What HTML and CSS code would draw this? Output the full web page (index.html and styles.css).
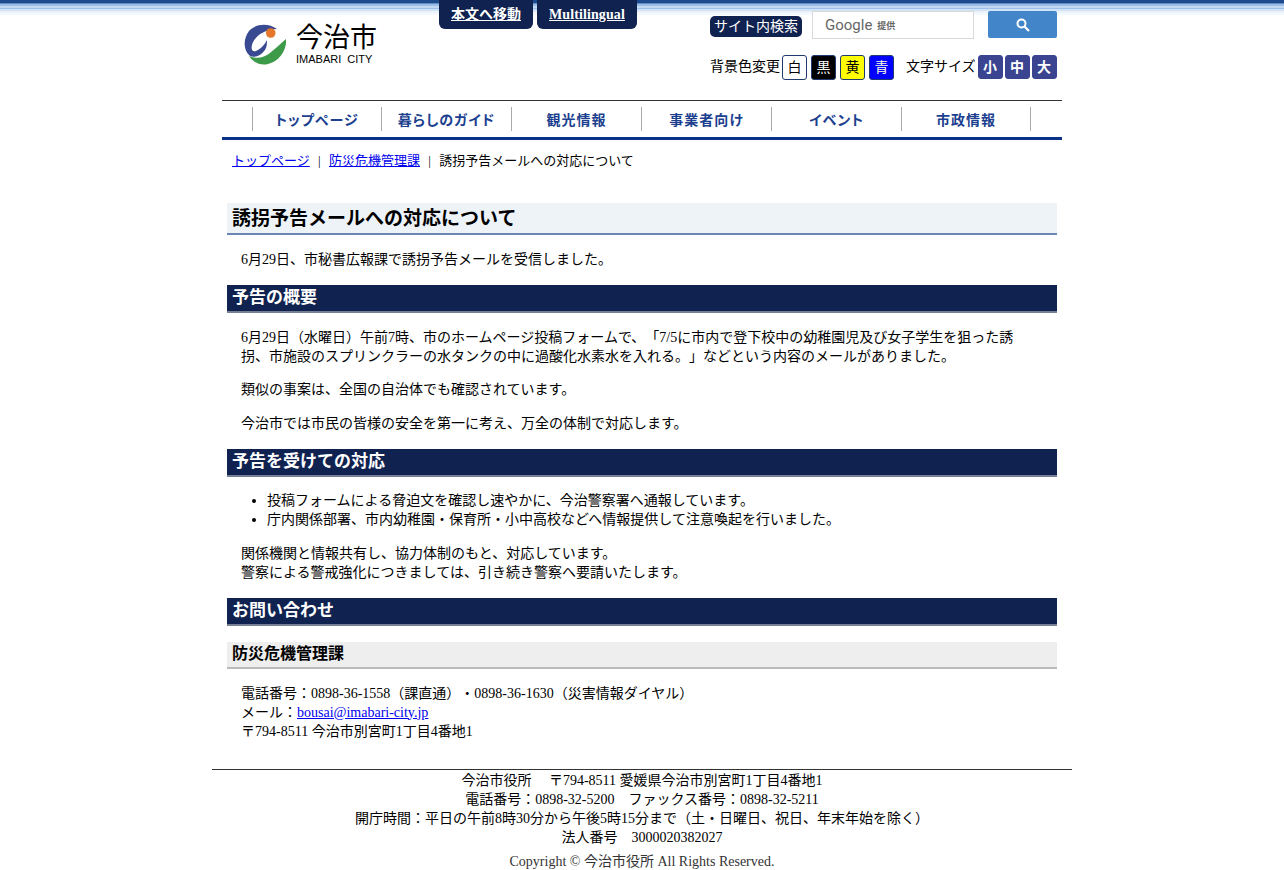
FILE: index.html
```html
<!DOCTYPE html>
<html lang="ja">

<head>
    <meta charset="UTF-8">
    <title>誘拐予告メールへの対応について</title>
    <link rel="stylesheet" href="styles.css">
</head>

<body>
    <div class="wrapper">
        <!-- Header -->
        <div class="header">
            <a class="logo" href="#">
                <svg width="42" height="42" viewBox="0 0 42 42">
                    <path d="M33 6C25 0 12 0 5 8C-1 16 -1 27 6 33C10 35 17 33 21 27C23 24 23 20 23 17C21 21 17 26 12 28C8 29 7 26 8 22C10 14 20 6 33 6Z" fill="#3a4a92"/>
                    <circle cx="26.7" cy="10" r="4.8" fill="#e5772a"/>
                    <path d="M42 16C43 26 36 38 24 41C16 43 9 39 5 33C12 36 20 35 26 30C31 26 36 21 42 16Z" fill="#3c9a49"/>
                </svg>
                <span class="logo-text">
                    <span class="logo-name">今治市</span>
                    <span class="logo-en">IMABARI&nbsp; CITY</span>
                </span>
            </a>
            <div class="skip-links">
                <a href="#">本文へ移動</a>
                <a href="#">Multilingual</a>
            </div>
            <div class="tools">
                <div class="search-row">
                    <span class="search-label">サイト内検索</span>
                    <div class="search-box"><span class="google">Google</span><span class="teikyo">提供</span></div>
                    <button class="search-btn">
                        <svg width="14" height="14" viewBox="0 0 14 14">
                            <circle cx="5.5" cy="5.5" r="4" fill="none" stroke="#fff" stroke-width="2"/>
                            <path d="M8.5 8.5L13 13" stroke="#fff" stroke-width="2.2"/>
                        </svg>
                    </button>
                </div>
                <div class="option-row">
                    <span class="option-label">背景色変更</span>
                    <span class="color-btn white">白</span>
                    <span class="color-btn black">黒</span>
                    <span class="color-btn yellow">黄</span>
                    <span class="color-btn blue">青</span>
                    <span class="option-label size-label">文字サイズ</span>
                    <span class="size-btn">小</span>
                    <span class="size-btn">中</span>
                    <span class="size-btn">大</span>
                </div>
            </div>
        </div>

        <!-- Navigation -->
        <div class="navbar">
            <a href="#">トップページ</a>
            <a href="#">暮らしのガイド</a>
            <a href="#">観光情報</a>
            <a href="#">事業者向け</a>
            <a href="#">イベント</a>
            <a href="#">市政情報</a>
        </div>

        <div class="breadcrumb">
            <a href="#">トップページ</a><span class="sep">|</span><a href="#">防災危機管理課</a><span class="sep">|</span>誘拐予告メールへの対応について
        </div>

        <!-- Content -->
        <div class="content">
            <h1>誘拐予告メールへの対応について</h1>
            <p>6月29日、市秘書広報課で誘拐予告メールを受信しました。</p>

            <h2>予告の概要</h2>
            <p>6月29日（水曜日）午前7時、市のホームページ投稿フォームで、「7/5に市内で登下校中の幼稚園児及び女子学生を狙った誘拐、市施設のスプリンクラーの水タンクの中に過酸化水素水を入れる。」などという内容のメールがありました。</p>
            <p>類似の事案は、全国の自治体でも確認されています。</p>
            <p>今治市では市民の皆様の安全を第一に考え、万全の体制で対応します。</p>

            <h2>予告を受けての対応</h2>
            <ul>
                <li>投稿フォームによる脅迫文を確認し速やかに、今治警察署へ通報しています。</li>
                <li>庁内関係部署、市内幼稚園・保育所・小中高校などへ情報提供して注意喚起を行いました。</li>
            </ul>
            <p>関係機関と情報共有し、協力体制のもと、対応しています。<br>警察による警戒強化につきましては、引き続き警察へ要請いたします。</p>

            <h2>お問い合わせ</h2>
            <h3>防災危機管理課</h3>
            <p>電話番号：0898-36-1558（課直通）・0898-36-1630（災害情報ダイヤル）<br>メール：<a href="#">bousai@imabari-city.jp</a><br>〒794-8511 今治市別宮町1丁目4番地1</p>
        </div>
    </div>

    <!-- Footer -->
    <div class="footer">
        <div class="address">
            今治市役所　 〒794-8511 愛媛県今治市別宮町1丁目4番地1<br>
            電話番号：0898-32-5200　ファックス番号：0898-32-5211<br>
            開庁時間：平日の午前8時30分から午後5時15分まで（土・日曜日、祝日、年末年始を除く）<br>
            法人番号　3000020382027
        </div>
        <div class="copyright">Copyright © 今治市役所 All Rights Reserved.</div>
    </div>
</body>

</html>
```

FILE: styles.css
```css
body {
    margin: 0;
    padding: 0;
    font-family: "Liberation Serif", "Noto Sans CJK JP", serif;
    font-size: 14px;
    line-height: 19px;
    text-spacing-trim: space-all;
    color: #000;
    background-color: #fff;
    background-image: linear-gradient(#1d4a8c 0, #1d4a8c 3px, #5f8cc6 3px, #5f8cc6 4px, #9dbde6 4px, #9dbde6 6px, #c3d8f2 6px, #c3d8f2 8px, #9dc0ea 8px, #9dc0ea 9px, #d3e3f6 9px, #d3e3f6 11px, #e6f0fb 11px, #ffffff 16px);
    background-size: 100% 16px;
    background-repeat: no-repeat;
}

a {
    color: #0000ee;
}

.wrapper {
    width: 840px;
    margin: 0 auto;
}

/* Header */
.header {
    display: flex;
    height: 100px;
}

.logo {
    display: flex;
    gap: 10px;
    width: 195px;
    height: 42px;
    margin: 23px 0 0 22px;
    text-decoration: none;
    color: #000;
}

.logo-text {
    display: flex;
    flex-direction: column;
    padding-top: 1px;
    font-family: "Liberation Sans", "Noto Sans CJK JP", sans-serif;
}

.logo-name {
    font-size: 27px;
    line-height: 28px;
}

.logo-en {
    font-size: 11px;
    line-height: 12px;
    margin-top: 1px;
}

.skip-links {
    display: flex;
    gap: 4px;
    align-items: flex-start;
    width: 271px;
}

.skip-links a {
    height: 29px;
    line-height: 29px;
    padding: 0 12px;
    color: #fff;
    font-weight: bold;
    background-color: #10224f;
    border-radius: 0 0 6px 6px;
}

.skip-links a:last-child {
    letter-spacing: 0.1px;
}

.tools {
    width: 347px;
}

.search-row {
    display: flex;
    align-items: flex-start;
    height: 33px;
    padding-top: 11px;
    margin-bottom: 11px;
}

.search-label {
    height: 21px;
    line-height: 21px;
    width: 92px;
    margin-top: 5px;
    color: #fff;
    text-align: center;
    background-color: #10224f;
    border-radius: 5px;
}

.search-box {
    box-sizing: border-box;
    display: flex;
    align-items: center;
    width: 162px;
    height: 28px;
    margin-left: 10px;
    padding-left: 12px;
    border: 1px solid #d9d9d9;
    background-color: #fff;
}

.google {
    font-family: "Roboto", "Liberation Sans", sans-serif;
    font-size: 15px;
    color: #666;
}

.teikyo {
    font-family: "Noto Sans CJK JP", sans-serif;
    font-size: 9px;
    font-weight: bold;
    color: #666;
    margin-left: 5px;
}

.search-btn {
    display: flex;
    align-items: center;
    justify-content: center;
    width: 69px;
    height: 27px;
    margin-left: 14px;
    padding: 0;
    border: none;
    border-radius: 2px;
    background-color: #4285c8;
}

.option-row {
    display: flex;
    align-items: flex-start;
    height: 25px;
    white-space: nowrap;
}

.option-label {
    line-height: 23px;
    margin-right: 2px;
}

.size-label {
    margin-left: 8px;
}

.color-btn,
.size-btn {
    box-sizing: border-box;
    flex: none;
    width: 25px;
    height: 25px;
    margin-right: 4px;
    line-height: 23px;
    text-align: center;
    border: 1px solid #1f3a6e;
    border-radius: 3px;
}

.color-btn.black {
    background-color: #000;
    color: #fff;
}

.color-btn.yellow {
    background-color: #ff0;
}

.color-btn.blue {
    background-color: #00f;
    color: #ffd;
}

.size-btn {
    height: 24px;
    margin-right: 2px;
    font-weight: bold;
    color: #fff;
    background-color: #3a4490;
    border-color: #3a4490;
}

.size-btn:last-child {
    margin-right: 0;
}

/* Navigation */
.navbar {
    display: grid;
    grid-template-columns: 129px repeat(5, 130px);
    height: 40px;
    padding: 6px 0 0 30px;
    box-sizing: border-box;
    border-top: 1px solid #333;
    border-bottom: 3px solid #0b3289;
}

.navbar a {
    height: 24px;
    line-height: 24px;
    text-align: center;
    font-family: "Noto Sans CJK JP", sans-serif;
    font-size: 14px;
    font-weight: bold;
    font-feature-settings: "palt";
    letter-spacing: 1px;
    text-decoration: none;
    color: #1c3f8f;
    border-left: 1px solid #aaa;
}

.navbar a:last-child {
    border-right: 1px solid #aaa;
}

.breadcrumb {
    height: 63px;
    padding: 11px 10px 0;
    box-sizing: border-box;
    font-size: 13px;
}

.breadcrumb .sep {
    margin: 0 8px;
    padding: 0 0.3px;
}

/* Content */
.content {
    padding: 0 5px;
}

.content h1 {
    margin: 0 0 15px;
    padding: 0 5px;
    height: 32px;
    line-height: 32px;
    box-sizing: border-box;
    font-size: 19px;
    background-color: #eef3f8;
    border-bottom: 2px solid #6b86b5;
}

.content h2 {
    margin: 16px 0 14px;
    padding: 0 5px;
    height: 28px;
    line-height: 25px;
    box-sizing: border-box;
    font-size: 17px;
    color: #fff;
    background-color: #10224f;
    border-bottom: 2px solid #777f95;
}

.content h3 {
    margin: 16px 0 15px;
    padding: 0 5px;
    height: 27px;
    line-height: 24px;
    box-sizing: border-box;
    font-size: 16px;
    background-color: #eee;
    border-bottom: 2px solid #bbb;
}

.content p {
    margin: 14.5px 30px 14.5px 14px;
}

.content ul {
    margin: 14px 0 15px;
    padding-left: 40px;
}

.footer {
    width: 860px;
    margin: 28px auto 0;
    padding-top: 1px;
    text-align: center;
    border-top: 1px solid #333;
}

.copyright {
    margin-top: 5px;
    color: #333;
}
```
